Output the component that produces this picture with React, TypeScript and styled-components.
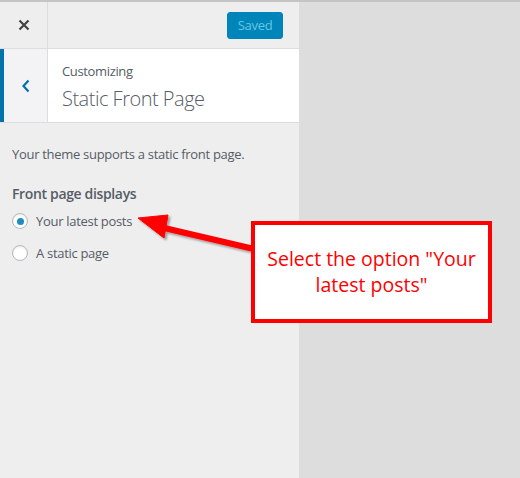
import styled, { createGlobalStyle } from "styled-components";

const GlobalStyle = createGlobalStyle`
  html, body {
    margin: 0;
    padding: 0;
    background: #dddddd;
  }
  body {
    font-family: "Open Sans", "Noto Sans", sans-serif;
    color: #555d66;
  }
`;

const App = () => {
  return (
    <Page>
      <GlobalStyle />
      <Sidebar>
        <Header>
          <CloseButton aria-label='Close'>
            <svg width='12' height='12' viewBox='0 0 12 12'>
              <path d='M1.5 1.5 L10.5 10.5 M10.5 1.5 L1.5 10.5' stroke='#444' strokeWidth='2.2' />
            </svg>
          </CloseButton>
          <HeaderActions>
            <SaveButton disabled>Saved</SaveButton>
          </HeaderActions>
        </Header>
        <SectionTitle>
          <BackButton aria-label='Back'>
            <svg width='10' height='14' viewBox='0 0 10 14'>
              <path d='M7.5 1.5 L2.5 7 L7.5 12.5' stroke='#0073aa' strokeWidth='2.2' fill='none' />
            </svg>
          </BackButton>
          <TitleText>
            <Breadcrumb>Customizing</Breadcrumb>
            <Title>Static Front Page</Title>
          </TitleText>
        </SectionTitle>
        <Content>
          <Description>Your theme supports a static front page.</Description>
          <FieldLabel>Front page displays</FieldLabel>
          <Options>
            <Option>
              <Radio $checked />
              Your latest posts
            </Option>
            <Option>
              <Radio />
              A static page
            </Option>
          </Options>
        </Content>
      </Sidebar>
      <Preview />
      <Arrow width='520' height='478' viewBox='0 0 520 478'>
        <defs>
          <filter id='shadow' x='-20%' y='-20%' width='140%' height='140%'>
            <feDropShadow dx='2' dy='2' stdDeviation='1.2' floodColor='#000' floodOpacity='0.35' />
          </filter>
        </defs>
        <g filter='url(#shadow)' fill='#ff0000' stroke='#ff0000'>
          <line x1='160' y1='227' x2='254' y2='249' strokeWidth='6' />
          <polygon points='138,218 168,215 164,238' strokeWidth='1' />
        </g>
      </Arrow>
      <Callout>Select the option "Your latest posts"</Callout>
    </Page>
  );
};
export default App;

const Page = styled.div`
  position: relative;
  display: flex;
  width: 520px;
  height: 478px;
  border-top: 2px solid #c4c4c4;
  box-sizing: border-box;
  overflow: hidden;
`;

const Sidebar = styled.div`
  width: 299px;
  flex-shrink: 0;
  display: flex;
  flex-direction: column;
  background: #eeeeee;
`;

const Preview = styled.div`
  flex: 1;
  background: #dddddd;
`;

const Header = styled.div`
  display: flex;
  height: 46px;
  border-bottom: 1px solid #dddddd;
`;

const CloseButton = styled.div`
  width: 47px;
  display: flex;
  align-items: center;
  justify-content: center;
  border-right: 1px solid #dddddd;
`;

const HeaderActions = styled.div`
  flex: 1;
  display: flex;
  align-items: center;
  justify-content: flex-end;
  padding-right: 16px;
`;

const SaveButton = styled.button`
  width: 56px;
  height: 27px;
  padding: 0;
  border: 1px solid #0083b6;
  border-radius: 3px;
  background: #0085ba;
  color: #66c6e4;
  font-family: "Open Sans", "Noto Sans", sans-serif;
  font-size: 13px;
  letter-spacing: -0.3px;
  line-height: 25px;
`;

const SectionTitle = styled.div`
  display: flex;
  height: 73px;
  border-bottom: 1px solid #dddddd;
  background: #ffffff;
`;

const BackButton = styled.div`
  width: 43px;
  display: flex;
  align-items: center;
  justify-content: center;
  background: #f3f3f5;
  border-left: 4px solid #0073aa;
  border-right: 1px solid #dddddd;
`;

const TitleText = styled.div`
  display: flex;
  flex-direction: column;
  padding: 13px 0 0 14px;
`;

const Breadcrumb = styled.span`
  font-size: 13px;
  letter-spacing: -0.35px;
  line-height: 18px;
  color: #555d66;
`;

const Title = styled.span`
  margin-top: 7px;
  font-size: 20px;
  font-weight: 300;
  letter-spacing: -0.5px;
  line-height: 24px;
  color: #555d66;
`;

const Content = styled.div`
  padding: 22px 12px 0;
`;

const Description = styled.p`
  margin: 0;
  font-size: 13px;
  letter-spacing: -0.3px;
  line-height: 18px;
`;

const FieldLabel = styled.div`
  margin-top: 22px;
  font-size: 14px;
  font-weight: 600;
  letter-spacing: -0.35px;
  line-height: 18px;
`;

const Options = styled.div`
  display: flex;
  flex-direction: column;
  gap: 14px;
  margin-top: 9px;
`;

const Option = styled.label`
  display: flex;
  align-items: center;
  gap: 8px;
  font-size: 13px;
  letter-spacing: -0.3px;
  line-height: 18px;
`;

const Radio = styled.span<{ $checked?: boolean }>`
  width: 16px;
  height: 16px;
  box-sizing: border-box;
  border-radius: 50%;
  border: 1px solid #b4b9be;
  background: #ffffff;
  box-shadow: inset 0 1px 2px rgba(0, 0, 0, 0.1);
  display: flex;
  align-items: center;
  justify-content: center;
  &::after {
    content: "";
    display: ${(p) => (p.$checked ? "block" : "none")};
    width: 7px;
    height: 7px;
    border-radius: 50%;
    background: #1e8cbe;
  }
`;

const Arrow = styled.svg`
  position: absolute;
  left: 0;
  top: -2px;
  pointer-events: none;
`;

const Callout = styled.div`
  position: absolute;
  left: 251px;
  top: 219px;
  width: 241px;
  height: 102px;
  box-sizing: border-box;
  border: 4px solid #ff0000;
  background: #ffffff;
  color: #ff0000;
  display: flex;
  align-items: center;
  justify-content: center;
  text-align: center;
  padding: 0 6px;
  font-family: "Open Sans", "Noto Sans", sans-serif;
  font-size: 19.5px;
  line-height: 26px;
`;
